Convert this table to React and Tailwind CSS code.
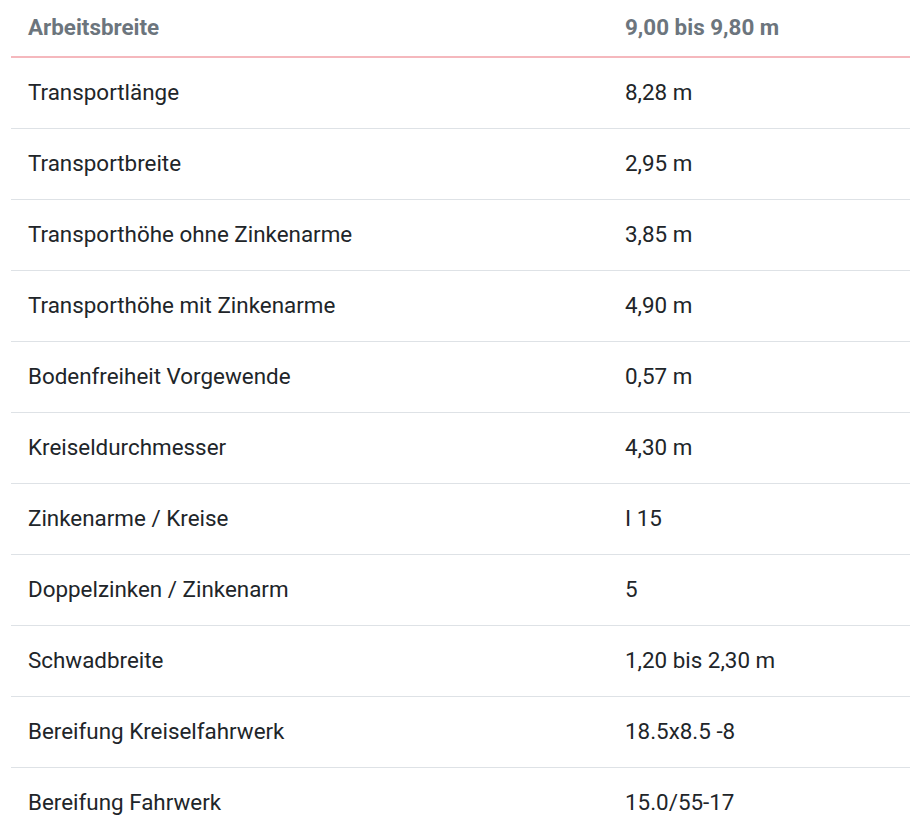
const rows = [
  ['Transportlänge', '8,28 m'],
  ['Transportbreite', '2,95 m'],
  ['Transporthöhe ohne Zinkenarme', '3,85 m'],
  ['Transporthöhe mit Zinkenarme', '4,90 m'],
  ['Bodenfreiheit Vorgewende', '0,57 m'],
  ['Kreiseldurchmesser', '4,30 m'],
  ['Zinkenarme / Kreise', 'I 15'],
  ['Doppelzinken / Zinkenarm', '5'],
  ['Schwadbreite', '1,20 bis 2,30 m'],
  ['Bereifung Kreiselfahrwerk', '18.5x8.5 -8'],
  ['Bereifung Fahrwerk', '15.0/55-17']
]

export default function App() {
  return (
    <div className="h-[838px] overflow-hidden bg-white pl-[11px] font-['Roboto',sans-serif]">
      <table className="w-[899px] table-fixed border-collapse text-left">
        <thead>
          <tr className="h-[57px] border-b-2 border-[#f5b8bd]">
            <th className="w-[597px] pl-[17px] text-[22.4px] font-bold text-[#6c757d]">Arbeitsbreite</th>
            <th className="pl-[17px] text-[22.4px] font-bold text-[#6c757d]">9,00 bis 9,80 m</th>
          </tr>
        </thead>
        <tbody>
          {rows.map(([label, value]) => (
            <tr key={label} className="h-[71px] border-b border-[#dee2e6] text-[22.4px] text-[#212529]">
              <td className="pl-[17px]">{label}</td>
              <td className="pl-[17px]">{value}</td>
            </tr>
          ))}
        </tbody>
      </table>
    </div>
  )
}
